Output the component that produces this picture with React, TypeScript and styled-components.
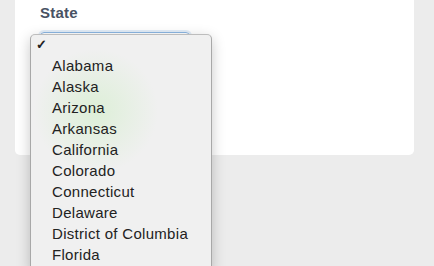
import React from 'react'
import styled, { createGlobalStyle } from 'styled-components'

const GlobalStyle = createGlobalStyle`
  html, body, #root {
    margin: 0;
    height: 100%;
  }
  body {
    background: #ececec;
    font-family: 'Liberation Sans', Arial, sans-serif;
    overflow: hidden;
  }
`

const Page = styled.div`
  position: relative;
  height: 100%;
  padding-left: 15px;
`

const Card = styled.div`
  width: 399px;
  height: 155px;
  background: #ffffff;
  border-radius: 0 0 5px 5px;
  padding: 4px 25px 0;
  box-sizing: border-box;
`

const Label = styled.div`
  font-size: 15px;
  line-height: 17px;
  font-weight: bold;
  letter-spacing: 0.2px;
  color: #485263;
`

const SelectBox = styled.div`
  margin-top: 11px;
  width: 150px;
  height: 34px;
  border: 1px solid #8cb6e2;
  border-radius: 4px;
  box-shadow: 0 0 0 2px rgba(140, 182, 226, 0.25);
  box-sizing: border-box;
`

const Menu = styled.ul`
  position: absolute;
  left: 30px;
  top: 34px;
  width: 182px;
  height: 236px;
  margin: 0;
  padding: 0;
  list-style: none;
  box-sizing: border-box;
  border: 1px solid #bdbdbd;
  border-left-color: #a8a8a8;
  border-right-color: #a8a8a8;
  border-bottom: none;
  border-radius: 5px 5px 0 0;
  background:
    radial-gradient(circle at 65px 76px, rgba(205, 238, 195, 0.55), rgba(205, 238, 195, 0) 62px),
    #f0f0f0;
  box-shadow: 0 4px 14px rgba(0, 0, 0, 0.22);
`

const Item = styled.li<{ $checked?: boolean }>`
  position: relative;
  height: 21px;
  line-height: 19px;
  padding-left: 21px;
  font-size: 15px;
  letter-spacing: 0.3px;
  color: #222222;
  white-space: nowrap;

  &::before {
    content: ${(p) => (p.$checked ? "'✓'" : "''")};
    position: absolute;
    left: 5px;
    top: 0;
    font-size: 13px;
    font-weight: bold;
  }
`

const states = [
  'Alabama',
  'Alaska',
  'Arizona',
  'Arkansas',
  'California',
  'Colorado',
  'Connecticut',
  'Delaware',
  'District of Columbia',
  'Florida',
]

function App() {
  return (
    <Page>
      <GlobalStyle />
      <Card>
        <Label>State</Label>
        <SelectBox />
      </Card>

      {/* open native-style dropdown */}
      <Menu>
        <Item $checked>&nbsp;</Item>
        {states.map((s) => (
          <Item key={s}>{s}</Item>
        ))}
      </Menu>
    </Page>
  )
}

export default App
